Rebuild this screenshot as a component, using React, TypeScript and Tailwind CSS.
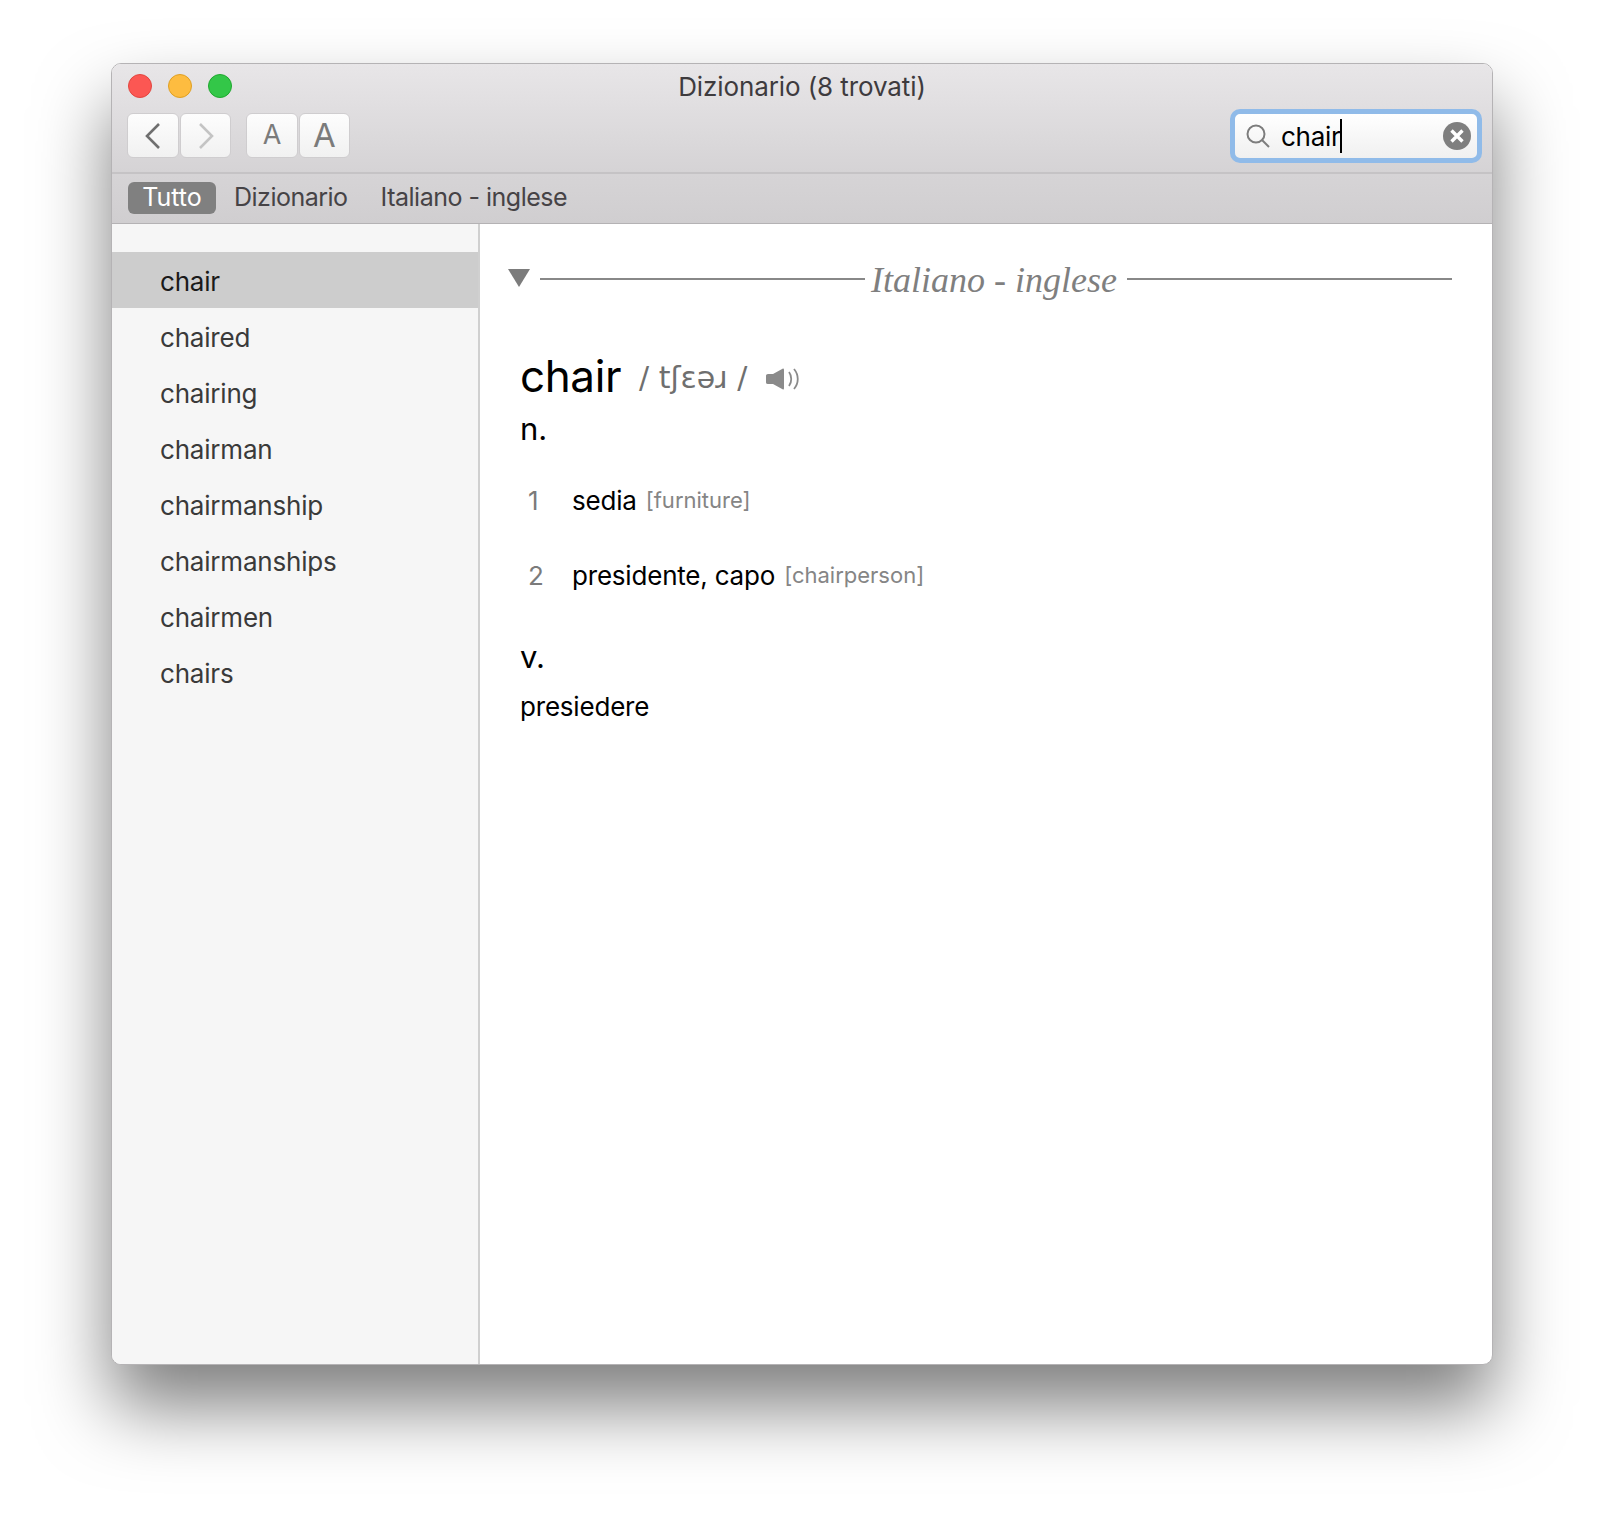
import React from "react";

const results = ["chair", "chaired", "chairing", "chairman", "chairmanship", "chairmanships", "chairmen", "chairs"];

const ToolButton = ({ className, children }: { className: string; children: React.ReactNode }) => (
  <div className={`flex h-[45px] items-center justify-center rounded-[6px] border border-[#cfcdcf] bg-gradient-to-b from-[#fdfdfd] to-[#f1f1f1] ${className}`}>
    {children}
  </div>
);

const App = () => {
  return (
    <div className="h-[1524px] w-[1604px] overflow-hidden bg-white pl-[111px] pt-[63px] font-['Inter','Liberation_Sans',sans-serif]">
      <div className="flex h-[1302px] w-[1382px] flex-col overflow-hidden rounded-[10px] border border-[#b5b3b5] bg-white shadow-[0_42px_72px_rgba(0,0,0,0.5)]">
        {/* toolbar */}
        <div className="relative h-[110px] shrink-0 border-b-2 border-[#c5c3c5] bg-gradient-to-b from-[#e8e6e8] to-[#d5d3d5]">
          <div className="flex gap-4 pl-[16px] pt-[10px]">
            <div className="h-6 w-6 rounded-full border border-[#e2463f] bg-[#fc5753]" />
            <div className="h-6 w-6 rounded-full border border-[#dfa023] bg-[#fdbc40]" />
            <div className="h-6 w-6 rounded-full border border-[#1fa82f] bg-[#33c748]" />
          </div>
          <div className="absolute left-0 right-0 top-[6px] text-center text-[26px] leading-[34px] tracking-[-0.1px] text-[#3e3b3e]">Dizionario (8 trovati)</div>
          <div className="flex pl-[15px] pt-[15px]">
            <ToolButton className="w-[52px]">
              <svg width="18" height="28" viewBox="0 0 18 28" fill="none" stroke="#6f6f6f" strokeWidth="2.6"><path d="M15 2 3 14l12 12" /></svg>
            </ToolButton>
            <ToolButton className="ml-[1px] w-[51px]">
              <svg width="18" height="28" viewBox="0 0 18 28" fill="none" stroke="#c4c4c4" strokeWidth="2.6"><path d="m3 2 12 12L3 26" /></svg>
            </ToolButton>
            <ToolButton className="ml-[15px] w-[52px] text-[27px] text-[#7b7b7b]">A</ToolButton>
            <ToolButton className="ml-[1px] w-[51px] text-[33px] text-[#7b7b7b]">A</ToolButton>
          </div>
          {/* search field */}
          <div className="absolute right-[10px] top-[45px] flex h-[54px] w-[252px] items-center rounded-[10px] border-[5px] border-[#90bbe9] bg-gradient-to-b from-white to-[#f0f0f0] pl-[10px] pr-[6px]">
            <svg width="26" height="26" viewBox="0 0 26 26" fill="none" stroke="#7d7d7d" strokeWidth="2"><circle cx="11" cy="11" r="8.5" /><path d="m17 17 7 7" /></svg>
            <span className="ml-[10px] border-r-2 border-black pt-[1px] text-[26px] leading-[33px] tracking-[-0.3px] text-black">chair</span>
            <svg className="ml-auto" width="28" height="28" viewBox="0 0 28 28"><circle cx="14" cy="14" r="14" fill="#7f7f7f" /><path d="m8.5 8.5 11 11m0-11-11 11" stroke="#fff" strokeWidth="3.4" /></svg>
          </div>
        </div>
        {/* scope bar */}
        <div className="flex h-[50px] shrink-0 items-center border-b border-[#b4b2b4] bg-gradient-to-b from-[#d6d4d6] to-[#d0ced0] pb-[2px] pl-[16px] text-[25px] tracking-[-0.5px] text-[#464346]">
          <span className="flex h-[32px] w-[88px] items-center justify-center rounded-[6px] bg-[#808080] tracking-normal text-white">Tutto</span>
          <span className="ml-[18px]">Dizionario</span>
          <span className="ml-[33px]">Italiano - inglese</span>
        </div>
        <div className="flex min-h-0 flex-1">
          {/* result list */}
          <div className="w-[368px] shrink-0 border-r-2 border-[#d0d0d0] bg-[#f6f6f6] pt-[28px]">
            {results.map((word, i) => (
              <div key={word} className={`flex h-[56px] items-center pl-[48px] pt-[3px] text-[26px] tracking-[-0.2px] ${i === 0 ? "bg-[#cdcdcd] text-[#1a1a1a]" : "text-[#3a3a3a]"}`}>
                {word}
              </div>
            ))}
          </div>
          {/* entry */}
          <div className="min-w-0 flex-1 pl-[28px] pr-[40px] pt-[31px] text-black">
            <div className="flex items-center">
              <svg className="mb-[3px] shrink-0" width="22" height="18" viewBox="0 0 22 18"><path d="M0 0h22L11 18z" fill="#7c7c7c" /></svg>
              <div className="ml-[10px] h-[2px] flex-1 bg-[#888]" />
              <span className="mb-[1px] ml-[6px] mr-[10px] mt-[3px] font-['Liberation_Serif',serif] text-[36px] italic leading-[44px] text-[#7f7f7f]">Italiano - inglese</span>
              <div className="h-[2px] flex-1 bg-[#888]" />
            </div>
            <div className="pl-[12px]">
              <div className="mt-[43px] flex items-center">
                <span className="text-[44px] leading-[60px] tracking-[-0.4px]">chair</span>
                <span className="ml-[18px] mt-[2px] font-['DejaVu_Sans',sans-serif] text-[30px] text-[#6f6f6f]">/ tʃɛəɹ /</span>
                <svg className="ml-[19px] mt-[6px]" width="34" height="22" viewBox="0 0 34 22" fill="none"><path d="M0 7.5Q0 6 2 6h5l10-5.5Q18 0 18 2v18q0 2-1 1.5L7 16H2q-2 0-2-1.5z" fill="#8a8a8a" /><path d="M23 4c3 4 3 10 0 14M28 1c5 6 5 14 0 20" stroke="#8a8a8a" strokeWidth="1.8" /></svg>
              </div>
              <div className="mt-[4px] text-[31px] leading-[38px]">n.</div>
              <div className="mt-[30px] flex h-[44px] items-center text-[26px] tracking-[-0.2px]">
                <span className="w-[52px] pl-[8px] text-[#7b7b7b]">1</span>
                <span>sedia</span>
                <span className="ml-[9px] mt-[1px] text-[22px] tracking-normal text-[#858585]">[furniture]</span>
              </div>
              <div className="mt-[31px] flex h-[44px] items-center text-[26px] tracking-[-0.2px]">
                <span className="w-[52px] pl-[8px] text-[#7b7b7b]">2</span>
                <span>presidente, capo</span>
                <span className="ml-[9px] mt-[1px] text-[22px] tracking-normal text-[#858585]">[chairperson]</span>
              </div>
              <div className="mt-[40px] text-[31px] leading-[40px]">v.</div>
              <div className="mt-[10px] text-[26px] leading-[40px] tracking-[-0.2px]">presiedere</div>
            </div>
          </div>
        </div>
      </div>
    </div>
  );
};

export default App;
